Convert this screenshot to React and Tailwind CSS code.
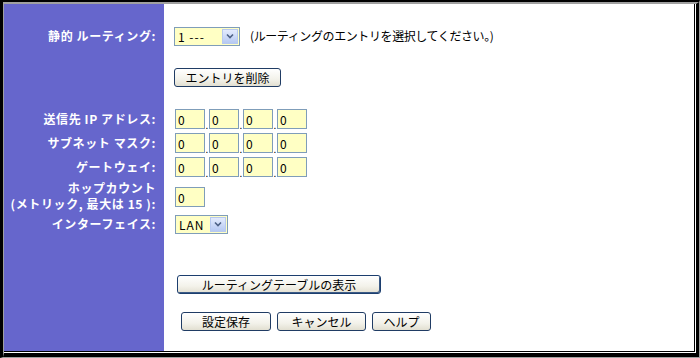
import React from 'react';

const font = "font-['Noto_Sans_CJK_JP','Noto_Sans',sans-serif]";

const Label = ({ children }) => (
  <div className="w-[160px] shrink-0 pr-[8px] text-right text-[12px] font-bold leading-[16px] tracking-[0.6px] text-white">
    {children}
  </div>
);

const Field = ({ value = '0', w = 'w-[30px]' }) => (
  <input
    readOnly
    defaultValue={value}
    className={`${w} h-[20px] border border-[#7f9db9] bg-[#ffffc4] px-[2px] text-[12px] leading-[18px] text-black outline-none ${font}`}
  />
);

const Chevron = () => (
  <div className="flex h-full w-[16px] items-center justify-center border border-[#b7c9ef] bg-[linear-gradient(#e3ebfd,#b6c9f2)]">
    <svg width="8" height="6" viewBox="0 0 8 6">
      <path d="M1 1.5 L4 4.5 L7 1.5" fill="none" stroke="#4d6185" strokeWidth="1.6" />
    </svg>
  </div>
);

const Select = ({ value, w }) => (
  <div className={`${w} flex h-[19px] items-stretch border border-[#7f9db9] bg-[#ffffc4] p-px`}>
    <span className="flex-1 pl-[2px] text-[12px] leading-[16px] tracking-[1px] text-black">{value}</span>
    <Chevron />
  </div>
);

const Btn = ({ children, w, bold }) => (
  <button
    className={`${w} h-[19px] rounded-[3px] border ${bold ? 'border-[#1c3e6e] shadow-[inset_-1px_-1px_0_#3c5b86]' : 'border-[#203c64]'} bg-[linear-gradient(#ffffff,#f3f2ea_60%,#e2dfd1)] text-[12px] leading-[15px] text-black ${font}`}
  >
    {children}
  </button>
);

const Dot = () => (
  <span className="w-[4px] text-center text-[10px] leading-[8px] text-black">.</span>
);

const IP = () => (
  <div className="flex items-end">
    <Field />
    <Dot />
    <Field />
    <Dot />
    <Field />
    <Dot />
    <Field />
  </div>
);

export default function App() {
  return (
    <div className={`h-[358px] w-[700px] bg-white ${font}`}>
      <div className="h-full w-full border-l-[3px] border-t-[2px] border-r border-b border-l-black border-t-black border-r-[#a0a0a0] border-b-[#a0a0a0]">
        <div className="h-full w-full border-l border-t-2 border-r-[3px] border-b-[4px] border-l-[#a0a0a0] border-t-[#a0a0a0] border-r-black border-b-black">
          <div className="h-full w-full border-r border-b border-white">
            <div className="flex h-full w-full flex-col border-r border-b border-black bg-[linear-gradient(to_right,#6666cc_160px,#ffffff_160px)]">
              <div className="h-[21px]" />

              <div className="flex h-[22px] items-center">
                <Label>静的 ルーティング:</Label>
                <div className="flex items-center pl-[10px]">
                  <Select value="1 ---" w="w-[66px]" />
                  <span className="ml-[10px] text-[12px] tracking-[-0.4px] text-black">(ルーティングのエントリを選択してください。)</span>
                </div>
              </div>

              <div className="h-[17px]" />

              <div className="flex h-[24px] items-center">
                <Label />
                <div className="pl-[10px]">
                  <Btn w="w-[107px]">エントリを削除</Btn>
                </div>
              </div>

              <div className="h-[19px]" />

              <div className="flex h-[24px] items-center">
                <Label>送信先 IP アドレス:</Label>
                <div className="pl-[11px]"><IP /></div>
              </div>
              <div className="flex h-[24px] items-center">
                <Label>サブネット マスク:</Label>
                <div className="pl-[11px]"><IP /></div>
              </div>
              <div className="flex h-[24px] items-center">
                <Label>ゲートウェイ:</Label>
                <div className="pl-[11px]"><IP /></div>
              </div>

              <div className="flex h-[33px] items-center">
                <Label>
                  <div>ホップカウント</div>
                  <div>(メトリック, 最大は 15 ):</div>
                </Label>
                <div className="pl-[11px]"><Field /></div>
              </div>

              <div className="flex h-[24px] items-center">
                <Label>インターフェイス:</Label>
                <div className="pl-[11px]">
                  <Select value="LAN" w="w-[53px]" />
                </div>
              </div>

              <div className="h-[34px]" />

              <div className="flex h-[26px] items-center">
                <Label />
                <div className="pl-[13px]">
                  <Btn w="w-[204px]" bold>ルーティングテーブルの表示</Btn>
                </div>
              </div>

              <div className="h-[13px]" />

              <div className="flex h-[25px] items-center">
                <Label />
                <div className="flex gap-[6px] pl-[17px]">
                  <Btn w="w-[90px]">設定保存</Btn>
                  <Btn w="w-[89px]">キャンセル</Btn>
                  <Btn w="w-[59px]">ヘルプ</Btn>
                </div>
              </div>
            </div>
          </div>
        </div>
      </div>
    </div>
  );
}
